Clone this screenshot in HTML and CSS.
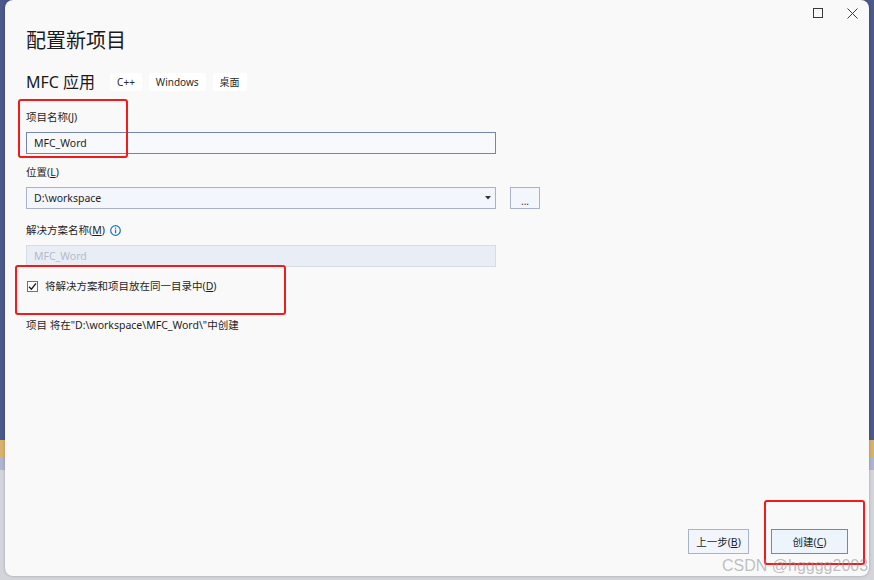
FILE: index.html
```html
<!DOCTYPE html>
<html lang="zh-CN">
<head>
<meta charset="utf-8">
<title>配置新项目</title>
<link rel="stylesheet" href="styles.css">
</head>
<body>
<div class="dialog">
  <div class="titlebar">
    <span class="tb-btn tb-max"><svg width="10" height="10" viewBox="0 0 10 10"><rect x="0.5" y="0.5" width="9" height="9" fill="none" stroke="#3a3a3a" stroke-width="1"/></svg></span>
    <span class="tb-btn tb-close"><svg width="11" height="11" viewBox="0 0 11 11"><path d="M0.5 0.5L10.5 10.5M10.5 0.5L0.5 10.5" stroke="#3a3a3a" stroke-width="1" fill="none"/></svg></span>
  </div>
  <div class="content">
    <h1 class="title">配置新项目</h1>
    <div class="subtitle-row">
      <span class="subtitle">MFC 应用</span>
      <span class="tag">C++</span>
      <span class="tag">Windows</span>
      <span class="tag">桌面</span>
    </div>

    <div class="label label-first">项目名称(<u>J</u>)</div>
    <div class="field field-active">MFC_Word</div>

    <div class="label label-second">位置(<u>L</u>)</div>
    <div class="select-row">
      <div class="field field-select">
        <span>D:\workspace</span>
        <svg class="caret" width="6" height="4" viewBox="0 0 6 4"><path d="M0 0H6L3 3.5Z" fill="#333"/></svg>
      </div>
      <div class="browse">...</div>
    </div>

    <div class="label label-third">解决方案名称(<u>M</u>)
      <svg class="info" width="11" height="11" viewBox="0 0 11 11"><circle cx="5.5" cy="5.5" r="4.8" fill="none" stroke="#1a73c8" stroke-width="1.2"/><rect x="4.9" y="4.6" width="1.3" height="3.6" fill="#1a73c8"/><rect x="4.9" y="2.6" width="1.3" height="1.2" fill="#1a73c8"/></svg>
    </div>
    <div class="field field-disabled">MFC_Word</div>

    <div class="check-row">
      <span class="checkbox"><svg width="9" height="9" viewBox="0 0 9 9"><path d="M1 4.8L3.4 7.2L8 1.4" fill="none" stroke="#1e1e1e" stroke-width="1.4"/></svg></span>
      <span class="check-label">将解决方案和项目放在同一目录中(<u>D</u>)</span>
    </div>

    <div class="path-note">项目 将在&quot;D:\workspace\MFC_Word\&quot;中创建</div>
  </div>

  <div class="footer">
    <button class="btn btn-back">上一步(<u>B</u>)</button>
    <button class="btn btn-create">创建(<u>C</u>)</button>
  </div>

  <div class="mark mark-name"></div>
  <div class="mark mark-check"></div>
  <div class="mark mark-create"></div>
  <div class="watermark">CSDN @hgggg2003</div>
</div>
</body>
</html>
```

FILE: styles.css
```css
html, body {
  margin: 0;
  padding: 0;
}

body {
  width: 874px;
  height: 580px;
  overflow: hidden;
  font-family: "Noto Sans", "Noto Sans CJK SC", sans-serif;
  color: #1e1e1e;
  background: linear-gradient(to bottom,
    #4b598b 0, #4b598b 440px,
    #d8b16c 440px, #d8b16c 458px,
    #aeb5cf 458px, #aeb5cf 470px,
    #d3d5da 470px, #d3d5da 580px);
}

.dialog {
  position: relative;
  margin-left: 5px;
  width: 864px;
  height: 576px;
  background: #f9f9fa;
  border-radius: 8px;
  box-shadow: 0 0 3px rgba(0, 0, 0, 0.25);
  display: flex;
  flex-direction: column;
}

.titlebar {
  height: 27px;
  box-sizing: border-box;
  display: flex;
  justify-content: flex-end;
  align-items: flex-start;
  padding: 8px 11px 0 0;
  gap: 24px;
}

.tb-btn {
  display: flex;
  line-height: 0;
}

.content {
  padding-left: 21px;
  display: flex;
  flex-direction: column;
  align-items: flex-start;
}

.title {
  margin: 0;
  font-size: 20px;
  font-weight: normal;
  line-height: 26px;
  color: #1a1a1a;
  font-family: "Noto Sans CJK SC", sans-serif;
}

.subtitle-row {
  margin-top: 19px;
  height: 20px;
  display: flex;
  align-items: center;
  gap: 7px;
}

.subtitle {
  font-size: 16px;
  line-height: 20px;
  margin-right: 8px;
  color: #1a1a1a;
}

.tag {
  height: 18px;
  line-height: 18px;
  padding: 0 7px;
  font-size: 10px;
  background: #ffffff;
  border-radius: 3px;
  color: #2a2a2a;
}

.label {
  font-size: 10.5px;
  line-height: 16px;
  color: #1e1e1e;
  display: flex;
  align-items: center;
}

.label u,
.check-label u,
.btn u {
  text-decoration-thickness: 1px;
  text-underline-offset: 1px;
}

.label-first { margin-top: 17px; }
.label-second { margin-top: 10px; }
.label-third { margin-top: 13px; }

.info {
  margin-left: 5px;
}

.field {
  box-sizing: border-box;
  width: 470px;
  height: 22px;
  margin-top: 7px;
  padding-left: 7px;
  font-size: 10.5px;
  line-height: 20px;
  display: flex;
  align-items: center;
}

.field-active {
  border: 1px solid #7586ae;
  background: #f7f9fd;
}

.select-row {
  margin-top: 7px;
  display: flex;
  gap: 14px;
}

.field-select {
  margin-top: 0;
  border: 1px solid #a9b2c8;
  background: #f3f6fc;
  justify-content: space-between;
  padding-right: 4px;
}

.caret {
  display: block;
}

.browse {
  box-sizing: border-box;
  width: 30px;
  height: 22px;
  border: 1px solid #a9b2c8;
  background: #f3f6fc;
  font-size: 10px;
  line-height: 22px;
  text-align: center;
  color: #333;
  padding-top: 2px;
}

.field-disabled {
  border: 1px solid #d5dbe7;
  background: #e9eef6;
  color: #b3bac8;
}

.check-row {
  margin-top: 11px;
  height: 16px;
  display: flex;
  align-items: center;
  padding-left: 1px;
}

.checkbox {
  box-sizing: border-box;
  width: 11px;
  height: 11px;
  border: 1px solid #707070;
  background: #ffffff;
  display: flex;
  align-items: center;
  justify-content: center;
}

.check-label {
  margin-left: 7px;
  font-size: 10.5px;
  line-height: 16px;
}

.path-note {
  margin-top: 23px;
  font-size: 10.5px;
  line-height: 16px;
}

.footer {
  margin-top: auto;
  display: flex;
  justify-content: flex-end;
  gap: 22px;
  padding: 0 21px 22px 0;
}

.btn {
  box-sizing: border-box;
  height: 25px;
  font-family: "Noto Sans", "Noto Sans CJK SC", sans-serif;
  font-size: 10.5px;
  color: #1e1e1e;
  background: #f2f5fb;
  border: 1px solid #a9b3c9;
  padding: 0;
  display: flex;
  align-items: center;
  justify-content: center;
}

.btn-back { width: 61px; }

.btn-create {
  width: 77px;
  border-color: #4f93d2;
  background: #eef4fc;
}

.mark {
  position: absolute;
  box-sizing: border-box;
  border: 2px solid #f21a1a;
  border-radius: 3px;
}

.mark-name { left: 13px; top: 99px; width: 110px; height: 59px; }
.mark-check { left: 10px; top: 265px; width: 271px; height: 50px; }
.mark-create { left: 759px; top: 500px; width: 101px; height: 65px; }

.watermark {
  position: absolute;
  left: 717px;
  top: 556px;
  font-family: "Liberation Sans", Arial, sans-serif;
  font-size: 16px;
  line-height: 20px;
  color: rgba(140, 140, 140, 0.55);
  white-space: nowrap;
}
```
